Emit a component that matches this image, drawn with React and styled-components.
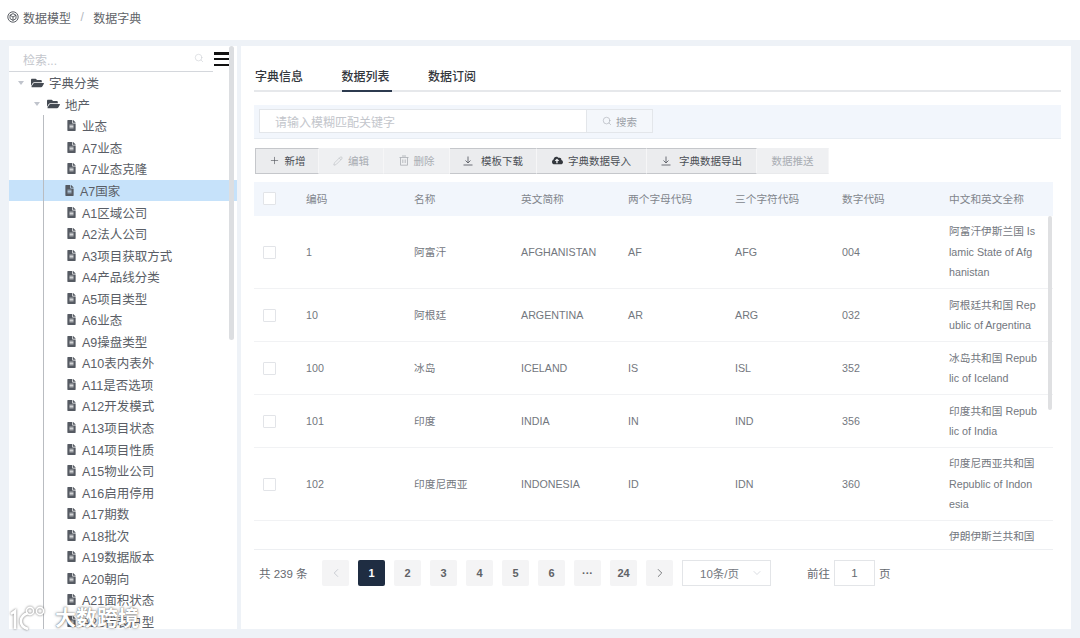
import React from 'react';
import styled, { createGlobalStyle } from 'styled-components';
import { Plus, Pencil, Search, ChevronDown, ChevronLeft, ChevronRight } from 'lucide-react';
import { FaFolderOpen, FaFileAlt, FaCloudUploadAlt } from 'react-icons/fa';

const GlobalStyle = createGlobalStyle`
  html, body { margin: 0; padding: 0; height: 638px; overflow: hidden; background: #eef2f7; }
  body { font-family: "Liberation Sans", "Noto Sans CJK SC", sans-serif; color: #606266; }
  * { box-sizing: border-box; }
`;

const Page = styled.div`
  position: relative;
  width: 1080px;
  height: 638px;
  display: flex;
  flex-direction: column;
  overflow: hidden;
`;

const Crumbs = styled.div`
  height: 40px;
  flex: none;
  background: #fff;
  display: flex;
  align-items: center;
  padding: 0 0 6px 7px;
  font-size: 12px;
  color: #5f6368;
`;
const CrumbSep = styled.span`
  margin: 0 9.5px;
  color: #b4b8bf;
`;
const CrumbIcon = styled.svg`
  width: 12px;
  height: 12px;
  margin-right: 4px;
`;

const Body = styled.div`
  flex: 1;
  display: flex;
  gap: 4px;
  padding: 6px 9px 9px;
  min-height: 0;
`;

const TreePanel = styled.div`
  position: relative;
  width: 228px;
  flex: none;
  background: #fff;
  overflow: hidden;
  display: flex;
  flex-direction: column;
`;
const TreeSearch = styled.div`
  height: 26px;
  flex: none;
  display: flex;
  align-items: flex-start;
`;
const TreeInput = styled.div`
  width: 204px;
  height: 26px;
  border-bottom: 1px solid #d4d7dc;
  display: flex;
  justify-content: space-between;
  padding: 5px 9px 0 14px;
  font-size: 12px;
  color: #c3c6cc;
  svg { margin-top: 2px; }
`;
const Burger = styled.div`
  margin: 6px 0 0 1px;
  width: 18px;
  height: 14px;
  display: flex;
  flex-direction: column;
  justify-content: space-between;
  span { height: 2.5px; background: #111; display: block; }
`;
const TreeScroll = styled.div`
  position: absolute;
  left: 220px;
  top: 0;
  width: 5px;
  height: 294px;
  background: #dcdee1;
  border-radius: 3px;
`;
const TreeRow = styled.div`
  height: 21.56px;
  flex: none;
  display: flex;
  align-items: center;
  font-size: 12.5px;
  color: #5a5e66;
  padding-left: ${(p) => p.$indent}px;
  background: ${(p) => (p.$active ? '#c6e2fa' : 'transparent')};
  position: relative;
`;
const Caret = styled.span`
  width: 0;
  height: 0;
  border-left: 3.5px solid transparent;
  border-right: 3.5px solid transparent;
  border-top: 4.5px solid #c0c4cc;
  margin-right: 7px;
`;
const FolderIcon = styled(FaFolderOpen)`
  width: 13px;
  height: 12px;
  color: #444a52;
  margin-right: 5px;
`;
const FileIcon = styled(FaFileAlt)`
  width: 9px;
  height: 11px;
  color: #555a62;
  margin-right: 6px;
`;
const Leaves = styled.div`
  position: relative;
  display: flex;
  flex-direction: column;
  &::before {
    content: '';
    position: absolute;
    left: 34px;
    top: 0;
    bottom: 0;
    width: 1px;
    background: #b9bcc1;
    z-index: 1;
  }
`;

const Main = styled.div`
  flex: 1;
  background: #fff;
  padding: 0 10px 0 13px;
  display: flex;
  flex-direction: column;
  min-width: 0;
`;
const Tabs = styled.div`
  height: 46px;
  flex: none;
  display: flex;
  border-bottom: 2px solid #e6e8eb;
  gap: 36.5px;
  padding-left: 1px;
`;
const Tab = styled.div`
  height: 46px;
  width: 50px;
  padding-top: 21px;
  font-size: 12px;
  font-weight: 500;
  color: #33373d;
  white-space: nowrap;
  border-bottom: 2px solid ${(p) => (p.$active ? '#2c3a4f' : 'transparent')};
`;
const SearchBar = styled.div`
  margin-top: 13px;
  height: 34px;
  flex: none;
  background: #f2f6fc;
  border-bottom: 1px solid #e8edf3;
  display: flex;
  padding: 4px 0 0 5px;
`;
const SearchInput = styled.div`
  width: 327px;
  height: 24px;
  background: #fff;
  border: 1px solid #e3e6ea;
  border-right: 0;
  font-size: 12px;
  color: #c3c6cc;
  padding: 3px 0 0 15px;
`;
const SearchButton = styled.div`
  width: 67px;
  height: 24px;
  background: #f4f7fb;
  border: 1px solid #e3e6ea;
  font-size: 10.5px;
  color: #9b9fa6;
  display: flex;
  align-items: center;
  justify-content: center;
  gap: 4px;
`;
const Toolbar = styled.div`
  margin: 9px 0 8px 1px;
  height: 26px;
  flex: none;
  display: flex;
`;
const ToolButton = styled.div`
  width: ${(p) => p.$w}px;
  height: 26px;
  padding-bottom: 1px;
  display: flex;
  align-items: center;
  justify-content: center;
  gap: ${(p) => p.$gap || 5}px;
  font-size: 10.5px;
  background: ${(p) => (p.$off ? '#eff0f2' : '#ebecee')};
  color: ${(p) => (p.$off ? '#a9adb3' : '#4a4e55')};
  border-right: 1px solid #f6f6f7;
  border-top: 1px solid ${(p) => (p.$off ? '#eff0f2' : '#c5c7cb')};
  border-bottom: 1px solid ${(p) => (p.$off ? '#e9eaec' : '#c5c7cb')};
  border-left: ${(p) => (p.$first ? '1px solid #c5c7cb' : '0')};
`;
const DownIcon = () => (
  <svg width="10" height="10" viewBox="0 0 10 10" fill="none" stroke="currentColor" strokeWidth="0.8">
    <path d="M5 0.5V6.5M2.5 4.5L5 7L7.5 4.5M0.5 9H9.5" />
  </svg>
);
const TrashIcon = () => (
  <svg width="10" height="11" viewBox="0 0 10 11" fill="none" stroke="currentColor" strokeWidth="0.8">
    <path d="M3 1H7M0.5 2.5H9.5M1.5 2.5V10.2H8.5V2.5M3.8 4.5V8M6.2 4.5V8" />
  </svg>
);

const COLUMNS = '52px 108px 107px 107px 107px 107px 107px 104px';

const Table = styled.div`
  position: relative;
  margin-right: 8px;
  display: flex;
  flex-direction: column;
  flex: none;
  border-bottom: 1px solid #edeff2;
`;
const HeadRow = styled.div`
  display: grid;
  grid-template-columns: ${COLUMNS};
  height: 34px;
  padding-bottom: 1px;
  align-items: center;
  background: #f2f6fc;
  font-size: 10.7px;
  color: #82868d;
`;
const Rows = styled.div`
  height: 333px;
  overflow: hidden;
`;
const BodyRow = styled.div`
  display: grid;
  grid-template-columns: ${COLUMNS};
  align-items: center;
  height: ${(p) => p.$h}px;
  border-bottom: 1px solid #f1f2f4;
  font-size: 10.7px;
  color: #73777e;
`;
const CheckCell = styled.div`
  padding-left: 9px;
  display: flex;
`;
const CheckBox = styled.span`
  width: 13px;
  height: 13px;
  background: #fff;
  border: 1px solid #e2e4e8;
  border-radius: 1px;
`;
const NameCell = styled.div`
  padding-bottom: 1px;
`;
const FullName = styled.div`
  line-height: 20.5px;
  white-space: pre-line;
`;
const TableScroll = styled.div`
  position: absolute;
  right: 1px;
  top: 34px;
  width: 4px;
  height: 194px;
  background: #dfe0e2;
  border-radius: 2px;
`;

const Pager = styled.div`
  margin-top: 10px;
  display: flex;
  align-items: center;
  height: 26px;
  font-size: 11.5px;
  color: #65696f;
  padding-left: 5px;
`;
const Total = styled.span`
  width: 63px;
`;
const PageList = styled.div`
  display: flex;
  gap: 9px;
`;
const PageButton = styled.div`
  width: 27px;
  height: 26px;
  border-radius: 2px;
  display: flex;
  align-items: center;
  justify-content: center;
  font-size: 11px;
  font-weight: 700;
  background: ${(p) => (p.$active ? '#1f2d42' : '#f4f4f5')};
  color: ${(p) => (p.$active ? '#fff' : p.$off ? '#c0c4cc' : '#606266')};
`;
const SizeSelect = styled.div`
  margin-left: 9px;
  width: 89px;
  height: 26px;
  border: 1px solid #e3e5e8;
  display: flex;
  align-items: center;
  justify-content: space-between;
  padding: 0 7px 0 17px;
  font-size: 11.5px;
  color: #73777e;
`;
const Goto = styled.span`
  margin-left: 36px;
`;
const GotoInput = styled.div`
  margin: 0 4px;
  width: 41px;
  height: 26px;
  border: 1px solid #e3e5e8;
  display: flex;
  align-items: center;
  justify-content: center;
  font-size: 11.5px;
`;

const Watermark = styled.div`
  position: absolute;
  left: 9px;
  top: 605px;
  display: flex;
  align-items: center;
  gap: 7px;
  color: #fff;
  font-size: 21px;
  font-weight: 700;
  line-height: 26px;
  text-shadow: 0 0 1px rgba(70, 70, 70, 0.8), 0 0 3px rgba(70, 70, 70, 0.6);
  z-index: 3;
  svg { filter: drop-shadow(0 0 1px rgba(70, 70, 70, 0.8)); }
`;

const leaves = ['业态', 'A7业态', 'A7业态克隆', 'A7国家', 'A1区域公司', 'A2法人公司', 'A3项目获取方式', 'A4产品线分类', 'A5项目类型', 'A6业态', 'A9操盘类型', 'A10表内表外', 'A11是否选项', 'A12开发模式', 'A13项目状态', 'A14项目性质', 'A15物业公司', 'A16启用停用', 'A17期数', 'A18批次', 'A19数据版本', 'A20朝向', 'A21面积状态', 'A22代表户型'];

const headers = ['编码', '名称', '英文简称', '两个字母代码', '三个字符代码', '数字代码', '中文和英文全称'];

// line breaks fall mid-word in the source table, so they are kept in the data
const rows = [
  { h: 73, code: '1', name: '阿富汗', cells: ['AFGHANISTAN', 'AF', 'AFG', '004'], full: '阿富汗伊斯兰国 Is\nlamic State of Afg\nhanistan' },
  { h: 53, code: '10', name: '阿根廷', cells: ['ARGENTINA', 'AR', 'ARG', '032'], full: '阿根廷共和国 Rep\nublic of Argentina' },
  { h: 53, code: '100', name: '冰岛', cells: ['ICELAND', 'IS', 'ISL', '352'], full: '冰岛共和国 Repub\nlic of Iceland' },
  { h: 53, code: '101', name: '印度', cells: ['INDIA', 'IN', 'IND', '356'], full: '印度共和国 Repub\nlic of India' },
  { h: 73, code: '102', name: '印度尼西亚', cells: ['INDONESIA', 'ID', 'IDN', '360'], full: '印度尼西亚共和国\nRepublic of Indon\nesia' },
  { h: 73, code: '103', name: '伊朗', cells: ['IRAN', 'IR', 'IRN', '364'], full: '伊朗伊斯兰共和国\nIslamic Republic\nof Iran' },
];

const pages = ['1', '2', '3', '4', '5', '6', '···', '24'];

export default function App() {
  return (
    <Page>
      <GlobalStyle />
      <Crumbs>
        <CrumbIcon viewBox="0 0 12 12" fill="none" stroke="#4a4e55" strokeWidth="0.9">
          <circle cx="6" cy="6" r="5.2" />
          <path d="M6 2.6L9 4.2V7.6L6 9.4L3 7.6V4.2ZM3 4.2L6 6L9 4.2M6 6V9.4" />
        </CrumbIcon>
        数据模型<CrumbSep>/</CrumbSep>数据字典
      </Crumbs>
      <Body>
        <TreePanel>
          <TreeSearch>
            <TreeInput>
              检索...
              <Search size={10} strokeWidth={1.2} color="#c3c6cc" />
            </TreeInput>
            <Burger><span /><span /><span /></Burger>
          </TreeSearch>
          <TreeRow $indent={9}><Caret /><FolderIcon />字典分类</TreeRow>
          <TreeRow $indent={25}><Caret /><FolderIcon />地产</TreeRow>
          <Leaves>
            {leaves.map((name) => (
              <TreeRow key={name} $indent={name === 'A7国家' ? 56 : 58} $active={name === 'A7国家'}>
                <FileIcon />{name}
              </TreeRow>
            ))}
          </Leaves>
          <TreeScroll />
        </TreePanel>
        <Main>
          <Tabs>
            <Tab>字典信息</Tab>
            <Tab $active>数据列表</Tab>
            <Tab>数据订阅</Tab>
          </Tabs>
          <SearchBar>
            <SearchInput>请输入模糊匹配关键字</SearchInput>
            <SearchButton><Search size={10} strokeWidth={1.2} />搜索</SearchButton>
          </SearchBar>
          <Toolbar>
            <ToolButton $w={64} $first><Plus size={11} strokeWidth={1.3} />新增</ToolButton>
            <ToolButton $w={65} $off><Pencil size={10} strokeWidth={1.1} />编辑</ToolButton>
            <ToolButton $w={66} $off><TrashIcon />删除</ToolButton>
            <ToolButton $w={87} $gap={8}><DownIcon />模板下载</ToolButton>
            <ToolButton $w={110}><FaCloudUploadAlt size={11} color="#33373d" />字典数据导入</ToolButton>
            <ToolButton $w={110} $gap={8}><DownIcon />字典数据导出</ToolButton>
            <ToolButton $w={72} $off>数据推送</ToolButton>
          </Toolbar>
          <Table>
            <HeadRow>
              <CheckCell><CheckBox /></CheckCell>
              {headers.map((h) => <div key={h}>{h}</div>)}
            </HeadRow>
            <Rows>
              {rows.map((r) => (
                <BodyRow key={r.code} $h={r.h}>
                  <CheckCell><CheckBox /></CheckCell>
                  <div>{r.code}</div>
                  <NameCell>{r.name}</NameCell>
                  {r.cells.map((c) => <div key={c}>{c}</div>)}
                  <FullName>{r.full}</FullName>
                </BodyRow>
              ))}
            </Rows>
            <TableScroll />
          </Table>
          <Pager>
            <Total>共 239 条</Total>
            <PageList>
              <PageButton $off><ChevronLeft size={14} strokeWidth={1.4} /></PageButton>
              {pages.map((p) => <PageButton key={p} $active={p === '1'}>{p}</PageButton>)}
              <PageButton><ChevronRight size={14} strokeWidth={1.4} /></PageButton>
            </PageList>
            <SizeSelect>10条/页<ChevronDown size={12} strokeWidth={1.2} color="#c0c4cc" /></SizeSelect>
            <Goto>前往</Goto>
            <GotoInput>1</GotoInput>
            <span>页</span>
          </Pager>
        </Main>
      </Body>
      <Watermark>
        <svg width="39" height="26" viewBox="0 0 39 26" fill="none" stroke="currentColor" strokeWidth="2.6">
          <path d="M2 9L6 6V24" />
          <path d="M19 8C10 11 9 21 19 24" />
          <circle cx="21" cy="6" r="3.6" strokeWidth="1.6" />
          <circle cx="31" cy="6" r="3.6" strokeWidth="1.6" />
        </svg>
        大数跨境
      </Watermark>
    </Page>
  );
}
